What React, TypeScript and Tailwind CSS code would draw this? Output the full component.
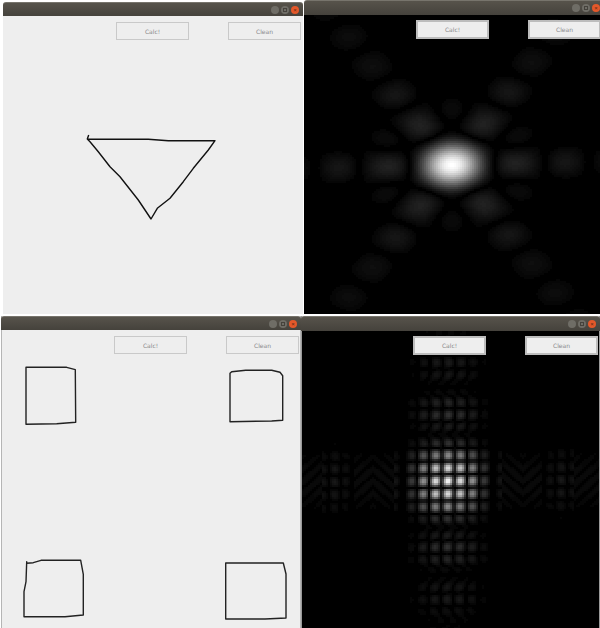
import { useMemo } from "react"
import type { ReactNode } from "react"

// gray tiles -> one path per gray level, way lighter than a rect per tile
function Pattern({ width, height, cx, cy, tile, amp }: { width: number, height: number, cx: number, cy: number, tile: number, amp: (x: number, y: number) => number }) {
    const levels = useMemo(() => {
        const paths: Record<number, string> = {}
        for (let y = 0; y < height; y += tile) {
            for (let x = 0; x < width; x += tile) {
                const v = Math.min(1, amp(x + tile / 2 - cx, y + tile / 2 - cy))
                const g = Math.round(v * 255 / 3) * 3
                if (g < 6) continue
                paths[g] = (paths[g] || "") + `M${x} ${y}h${tile}v${tile}h-${tile}z`
            }
        }
        return Object.entries(paths)
    }, [])
    return (
        <svg className="absolute inset-0" width={width} height={height} shapeRendering="crispEdges">
            {levels.map(([g, d]) => <path key={g} d={d} fill={`rgb(${g},${g},${g})`} />)}
        </svg>
    )
}

// sampled filled triangle, x and y swapped as in the output of the program
const triPoints: [number, number][] = []
for (let a = 0; a <= 1; a += 0.035) {
    for (let b = 0; a + b <= 1; b += 0.035) {
        const c = 1 - a - b
        triPoints.push([138 * a + 141 * b + 219 * c, 88 * a + 214 * b + 151 * c])
    }
}
const triMx = triPoints.reduce((s, p) => s + p[0], 0) / triPoints.length
const triMy = triPoints.reduce((s, p) => s + p[1], 0) / triPoints.length

function triangleAmp(x: number, y: number) {
    const D = 2520
    const u = 2 * Math.PI * x / D
    const v = 2 * Math.PI * y / D
    let re = 0
    for (const [px, py] of triPoints) {
        re += Math.cos(u * (px - triMx) + v * (py - triMy))
    }
    return Math.pow(Math.abs(re) / triPoints.length, 1.05)
}

const squares = [
    { x: 50.5, y: 395.5, w: 49, h: 57 },
    { x: 256, y: 396, w: 52, h: 50 },
    { x: 54, y: 588.5, w: 58, h: 55 },
    { x: 256, y: 591, w: 60, h: 56 },
]

const sinc = (t: number) => (Math.abs(t) < 1e-6 ? 1 : Math.sin(Math.PI * t) / (Math.PI * t))

function squaresAmp(x: number, y: number) {
    const D = 2560
    const u = x / D
    const v = y / D
    let re = 0
    let total = 0
    for (const s of squares) {
        const a = s.w * s.h * sinc(s.w * u) * sinc(s.h * v)
        re += a * Math.cos(2 * Math.PI * (u * (s.x - 154) + v * (s.y - 492)))
        total += s.w * s.h
    }
    const ax = Math.abs(x)
    if ((ax > 54 && ax < 94) || ax > 125) {
        const fade = Math.exp(-(y * y) / 900)
        return 0.04 * fade * Math.abs(Math.cos(Math.PI * (y + Math.sign(x) * Math.abs(ax - 75) * 0.9) / 12.5))
    }
    return Math.pow(Math.abs(re) / total, 1.05)
}

function TitleBar({ className }: { className: string }) {
    return (
        <div className={`flex items-center justify-end gap-[2px] pr-[4px] rounded-t-[3px] border-t border-[#77746c] bg-gradient-to-b from-[#57534b] to-[#45423c] ${className}`}>
            <span className="block w-[8px] h-[8px] rounded-full bg-[#6f6d66]" />
            <span className="flex items-center justify-center w-[8px] h-[8px] rounded-full bg-[#6f6d66]">
                <span className="block w-[4px] h-[4px] border border-[#45423c]" />
            </span>
            <span className="flex items-center justify-center w-[8px] h-[8px] rounded-full bg-[#e4582a] text-[6px] leading-none text-[#5b2a18] font-['Liberation_Sans',sans-serif]">×</span>
        </div>
    )
}

function WinButton({ label, dark }: { label: string, dark?: boolean }) {
    return (
        <button className={`w-[73px] flex items-center justify-center bg-[#eeeeee] text-[#8a8a8a] text-[6px] font-['DejaVu_Sans',sans-serif] ${dark ? "h-[19px] border-2 border-[#bdbdbd]" : "h-[18px] border border-[#c9c9c9]"}`}>
            {label}
        </button>
    )
}

function Window({ className, barClass, dark, rowClass, children }: { className: string, barClass: string, dark?: boolean, rowClass: string, children: ReactNode }) {
    return (
        <div className={`flex flex-col shrink-0 ${className}`}>
            <TitleBar className={barClass} />
            <div className={`relative flex-1 overflow-hidden ${dark ? "bg-black" : "bg-[#eeeeee]"}`}>
                {children}
                <div className={`relative flex justify-end gap-[39px] ${rowClass}`}>
                    <WinButton label="Calc!" dark={dark} />
                    <WinButton label="Clean" dark={dark} />
                </div>
            </div>
        </div>
    )
}

const triangle = "M88.7 135L87.3 139L148.3 139.3L168.3 140.7L215 140.7L208.3 150L193.3 168.3L183.3 181.7L170 198.3L157.3 208.3L151 219L145 210L138.3 200L120 176.7L110 166.7L98.3 151.7L90 141.7L87.3 139"

const boxes = [
    "M26 367.3L66.7 367.3L75.3 369.7L75.7 422.3L56.7 423.7L26 424.3Z",
    "M230 373.3L231.7 371.7L245.7 370.3L271.7 370.3L280 372.3L282.7 375.7L282.7 420.3L271.7 421L230 421.7Z",
    "M26.7 561.7L26.7 563.3L33.3 562.7L41 560.3L80.7 560.3L83.3 574.3L83.3 615L65 616.7L24 616.7L24 591.7L26 581.7Z",
    "M225.7 563L283.3 563L286 574L286 618L265 619L225.7 619Z",
]

export default function App() {
    return (
        <div className="w-[600px] h-[628px] bg-white overflow-hidden flex flex-col">
            <div className="flex items-start h-[316px] shrink-0">
                <Window className="ml-[3px] mt-[2px] w-[300px] h-[312px]" barClass="h-[14px]" rowClass="pt-[6px] pr-[2px]">
                    <svg className="absolute inset-0" width="300" height="298" viewBox="3 16 300 298" fill="none">
                        <path d={triangle} stroke="#111" strokeWidth="1.4" strokeLinejoin="round" />
                    </svg>
                </Window>
                <Window className="ml-[1px] w-[300px] h-[314px]" barClass="h-[15px]" rowClass="pt-[5px] pr-[3px]" dark>
                    <Pattern width={300} height={299} cx={148} cy={150} tile={2} amp={triangleAmp} />
                </Window>
            </div>
            <div className="flex items-start flex-1">
                <Window className="ml-[1px] w-[300px] h-[312px] border-l border-r border-[#b5b5b5]" barClass="h-[14px] -mx-px" rowClass="pt-[6px] pr-px">
                    <svg className="absolute inset-0" width="300" height="298" viewBox="2 330 300 298" fill="none">
                        {boxes.map(d => <path key={d} d={d} stroke="#222" strokeWidth="1.4" strokeLinejoin="round" />)}
                    </svg>
                </Window>
                <Window className="w-[299px] h-[312px] border-l border-r border-[#9a9a9a]" barClass="h-[15px] -mx-px" rowClass="pt-[5px] pr-px" dark>
                    <Pattern width={298} height={297} cx={146} cy={150} tile={2} amp={squaresAmp} />
                </Window>
            </div>
        </div>
    )
}
